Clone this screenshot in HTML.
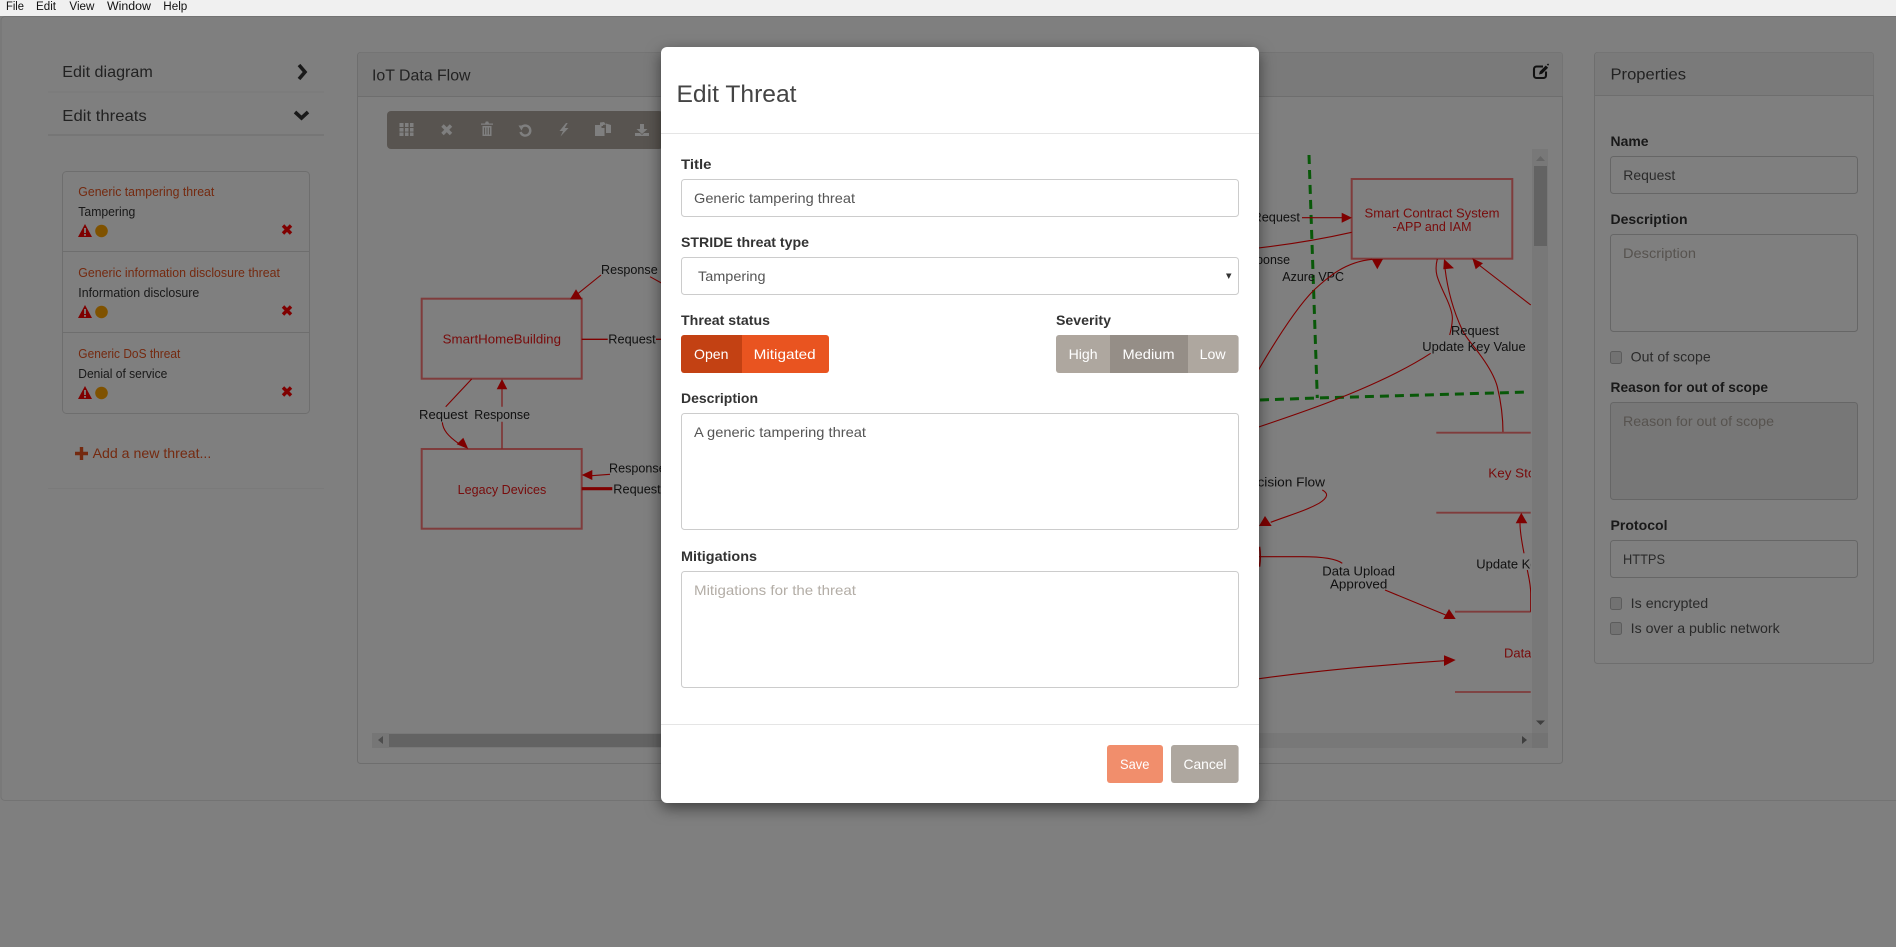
<!DOCTYPE html>
<html lang="en">
<head>
<meta charset="utf-8">
<title>Edit Threat</title>
<style>
html,body{margin:0;padding:0;width:1896px;height:947px;overflow:hidden;background:#fff;font-family:"Liberation Sans",sans-serif}
svg{position:absolute;left:0;top:0;width:1896px;height:947px;overflow:hidden}
svg text{font-family:"Liberation Sans",sans-serif;font-size:14px}
.backdrop{position:absolute;left:0;top:0;width:1896px;height:947px;background:rgba(0,0,0,.5)}
.menu{position:absolute;left:0;top:0;width:1896px;height:16px;background:#f0f0f0}
.modal{position:absolute;left:661px;top:47px;width:598px;height:756px;background:#fff;border-radius:6px;box-shadow:0 5px 15px rgba(0,0,0,.5)}
.d{font-size:12.5px;fill:#222}
.r{font-size:12.5px;fill:#f01818}
.l{font-size:14px;font-weight:700;fill:#333}
.pl{font-size:14px;font-weight:700;fill:#333}
.w{fill:#fff;font-size:14px}
.t{fill:#e95420;font-size:12.5px}
.k{fill:#333;font-size:12.5px}
.h{fill:#444;font-size:16px}
.p{fill:#555;font-size:14px}
.ph{fill:#aea79f;font-size:14px}
.ln{fill:none;stroke:#f00;stroke-width:1.1}
.ar{fill:#f00}
.bx{fill:none;stroke:#ff7878;stroke-width:2}
.gr{fill:none;stroke:#10b010;stroke-width:3;stroke-dasharray:9 6}
.tb{fill:#fff}
</style>
</head>
<body>
<svg viewBox="0 0 1896 947">
  <defs><clipPath id="dg"><rect x="372" y="149" width="1159" height="584"/></clipPath></defs>
  <path d="M1896 16.5H5a4 4 0 0 0-4 4V796a4 4 0 0 0 4 4.5H1896" fill="#fff" stroke="#e6e6e6"/>

  <text class="h" x="62.3" y="77" textLength="90.5" lengthAdjust="spacingAndGlyphs">Edit diagram</text>
  <path d="M299 65l6 7-6 7" fill="none" stroke="#333" stroke-width="3.6"/>
  <rect x="48" y="91.5" width="276" height="1" fill="#f5f5f5"/>
  <text class="h" x="62.3" y="121" textLength="84.5" lengthAdjust="spacingAndGlyphs">Edit threats</text>
  <path d="M295 112l6.5 6 6.5-6" fill="none" stroke="#333" stroke-width="3.6"/>
  <rect x="48" y="134.5" width="276" height="1" fill="#ddd"/>

  <rect x="62.5" y="171.5" width="247" height="242" rx="4" fill="#fff" stroke="#ddd"/>
  <rect x="63" y="251" width="246" height="1" fill="#ddd"/>
  <rect x="63" y="332" width="246" height="1" fill="#ddd"/>

  <text class="t" x="78.3" y="196" textLength="136" lengthAdjust="spacingAndGlyphs">Generic tampering threat</text>
  <text class="k" x="78.3" y="216" textLength="57" lengthAdjust="spacingAndGlyphs">Tampering</text>
  <text class="t" x="78.3" y="277" textLength="201.6" lengthAdjust="spacingAndGlyphs">Generic information disclosure threat</text>
  <text class="k" x="78.3" y="297" textLength="121" lengthAdjust="spacingAndGlyphs">Information disclosure</text>
  <text class="t" x="78.3" y="358" textLength="102" lengthAdjust="spacingAndGlyphs">Generic DoS threat</text>
  <text class="k" x="78.3" y="378" textLength="89" lengthAdjust="spacingAndGlyphs">Denial of service</text>

  <g>
    <path d="M85 224l7 13H78z" fill="#f00"/><rect x="84.1" y="228" width="1.8" height="5" fill="#fff"/><rect x="84.1" y="234" width="1.8" height="1.8" fill="#fff"/>
    <ellipse cx="101.5" cy="231" rx="6.3" ry="6.2" fill="#ffa500"/>
    <path d="M283 225.5l8 8M291 225.5l-8 8" stroke="#f00" stroke-width="3.4" fill="none"/>
  </g>
  <g transform="translate(0 81)">
    <path d="M85 224l7 13H78z" fill="#f00"/><rect x="84.1" y="228" width="1.8" height="5" fill="#fff"/><rect x="84.1" y="234" width="1.8" height="1.8" fill="#fff"/>
    <ellipse cx="101.5" cy="231" rx="6.3" ry="6.2" fill="#ffa500"/>
    <path d="M283 225.5l8 8M291 225.5l-8 8" stroke="#f00" stroke-width="3.4" fill="none"/>
  </g>
  <g transform="translate(0 162)">
    <path d="M85 224l7 13H78z" fill="#f00"/><rect x="84.1" y="228" width="1.8" height="5" fill="#fff"/><rect x="84.1" y="234" width="1.8" height="1.8" fill="#fff"/>
    <ellipse cx="101.5" cy="231" rx="6.3" ry="6.2" fill="#ffa500"/>
    <path d="M283 225.5l8 8M291 225.5l-8 8" stroke="#f00" stroke-width="3.4" fill="none"/>
  </g>

  <path d="M81.5 447v13M75 453.5h13" stroke="#e95420" stroke-width="3.4" fill="none"/>
  <text x="92.6" y="458" style="fill:#e95420;font-size:14px" textLength="118.7" lengthAdjust="spacingAndGlyphs">Add a new threat...</text>
  <rect x="48" y="488" width="276" height="1" fill="#f5f5f5"/>

  <rect x="357.5" y="52.5" width="1205" height="711" rx="3" fill="#fff" stroke="#ddd"/>
  <path d="M358 96V55.5a3 3 0 0 1 3-3H1559.5a3 3 0 0 1 3 3V96z" fill="#f5f5f5"/>
  <rect x="358" y="96" width="1204" height="1" fill="#ddd"/>
  <text class="h" x="372" y="80.5" textLength="98.5" lengthAdjust="spacingAndGlyphs">IoT Data Flow</text>
  <path d="M1543 66.5h-6.5a2.5 2.5 0 0 0-2.5 2.5v6.5a2.5 2.5 0 0 0 2.5 2.5h7a2.5 2.5 0 0 0 2.5-2.5v-4" fill="none" stroke="#222" stroke-width="2.1"/>
  <path d="M1539 74.5l.8-3 6-6 2.3 2.3-6 6z" fill="#222"/>
  <path d="M1546.8 64.5l1.3-1 1 1-1 1.3z" fill="#222"/>

  <rect x="387" y="111" width="276" height="38" rx="4" fill="#b0a9a1"/>
  <g class="tb">
    <path d="M399.5 123h4v4h-4zM405 123h3.5v4H405zM410 123h3.5v4H410zM399.5 128h4v3.6h-4zM405 128h3.5v3.6H405zM410 128h3.5v3.6H410zM399.5 132.5h4v3.5h-4zM405 132.5h3.5v3.5H405zM410 132.5h3.5v3.5H410z"/>
    <path d="M442.5 125.5l8.5 8.5M451 125.5l-8.5 8.5" stroke="#fff" stroke-width="3.5" fill="none"/>
    <path d="M481 123.5h4l.8-2h2.4l.8 2h4v1.3H481zM482.5 126h9v10h-9z"/>
    <path d="M484.5 127.5v7M487 127.5v7M489.5 127.5v7" stroke="#b0a9a1" stroke-width=".9" fill="none"/>
    <path d="M521 128a5 5 0 1 1-.5 4" fill="none" stroke="#fff" stroke-width="2.4"/>
    <path d="M518.5 125.5l5.5 0-2.5 5z"/>
    <path d="M566 123l-6.5 8h3.5l-2.500 5.500 8-8.500h-3.800l3-5z"/>
    <path d="M595 125h6.500v3h3v8H595zM600 122.500l4-.5 2 2.500-3 .5v1h-3zM606 123.500l5 1.500v8h-5z"/>
    <path d="M640 124h4v5h3.500l-5.500 5-5.500-5h3.500zM635 133h5l2 2 2-2h5v3h-14z"/>
  </g>

  <rect x="372" y="733" width="1176" height="15" fill="#f1f1f1"/>
  <rect x="372" y="733" width="17" height="15" fill="#ececec"/>
  <rect x="389" y="734" width="850" height="13" fill="#c6c6c6"/>
  <path d="M383 736v8l-5-4z" fill="#9a9a9a"/>
  <path d="M1522 736v8l5-4z" fill="#7e7e7e"/>
  <rect x="1532" y="149" width="16" height="584" fill="#f1f1f1"/>
  <rect x="1532" y="733" width="16" height="15" fill="#e6e6e6"/>
  <rect x="1534" y="166" width="13" height="80" fill="#c6c6c6"/>
  <path d="M1536 161l4.500-5 4.500 5z" fill="#ccc"/>
  <path d="M1536 720.500h9l-4.500 4.500z" fill="#7e7e7e"/>

  <g clip-path="url(#dg)">
    <rect class="bx" x="421.700" y="298.700" width="160" height="80"/>
    <text class="r" x="442.700" y="343.700" textLength="118.300" lengthAdjust="spacingAndGlyphs">SmartHomeBuilding</text>
    <rect class="bx" x="421.700" y="449" width="160" height="79.700"/>
    <text class="r" x="457.700" y="494" textLength="88.600" lengthAdjust="spacingAndGlyphs">Legacy Devices</text>

    <path class="ln" d="M601 275L578.300 293.300"/>
    <path class="ar" d="M576 289.300l6.300 10H570z"/>
    <text class="d" x="601" y="274" textLength="56.700" lengthAdjust="spacingAndGlyphs">Response</text>
    <path class="ln" d="M650 276.700L665 285"/>
    <path d="M581.700 339.300h26M656 339.300h8" fill="none" stroke="#f00" stroke-width="1.400"/>
    <text class="d" x="608.300" y="343.300" textLength="47.400" lengthAdjust="spacingAndGlyphs">Request</text>

    <path class="ln" d="M471.700 379L445.700 406.700"/>
    <path class="ln" d="M442.300 422.300C443 430 448 436 458.300 443.300"/>
    <path class="ar" d="M463.300 437.700l5 11.300-11.600-4.700z"/>
    <text class="d" x="419" y="419" textLength="48.700" lengthAdjust="spacingAndGlyphs">Request</text>
    <path d="M502 449v-27.300M502 406.700v-19" fill="none" stroke="#ff5050" stroke-width="1.400"/>
    <path class="ar" d="M502 379l5.300 10.300h-10.600z"/>
    <text class="d" x="474.300" y="419" textLength="55.700" lengthAdjust="spacingAndGlyphs">Response</text>

    <path class="ln" d="M610 474.300L591.700 475.700"/>
    <path class="ar" d="M581.700 475l10.600-5v10z"/>
    <text class="d" x="609" y="472.700" textLength="56.700" lengthAdjust="spacingAndGlyphs">Response</text>
    <path d="M581.700 488.700h30.600" stroke="#f00" stroke-width="3.200" fill="none"/>
    <text class="d" x="613.300" y="493.300" textLength="47.400" lengthAdjust="spacingAndGlyphs">Request</text>

    <path class="gr" d="M1309 155L1317.300 398"/>
    <path class="gr" d="M1230 401L1317.300 398L1529 392"/>

    <rect class="bx" x="1351.700" y="179" width="160.600" height="79.700"/>
    <text class="r" x="1364.500" y="217.700" textLength="135" lengthAdjust="spacingAndGlyphs">Smart Contract System</text>
    <text class="r" x="1392.500" y="231" textLength="79" lengthAdjust="spacingAndGlyphs">-APP and IAM</text>

    <text class="d" x="1252.500" y="221.700" textLength="47.400" lengthAdjust="spacingAndGlyphs">Request</text>
    <path class="ln" d="M1302 217.700H1342"/>
    <path class="ar" d="M1352 217.700l-10.300-5v10z"/>
    <path class="ln" d="M1240 250Q1300 244 1351.700 232.300"/>
    <text class="d" x="1234" y="264" textLength="56" lengthAdjust="spacingAndGlyphs">Response</text>
    <text class="d" x="1282.300" y="281" textLength="61.700" lengthAdjust="spacingAndGlyphs">Azure VPC</text>
    <path class="ln" d="M1255 376C1270 350 1294 310 1314 290C1328 277 1345 262 1372 259.300"/>
    <path class="ar" d="M1371.700 259H1383l-5.700 10.300z"/>
    <path class="ln" d="M1437.300 259C1434 272 1437 278 1445.700 296.700C1450 306 1453 314 1452.300 320C1452 326 1451 330 1449.700 335M1430.700 353.300C1405 370 1375 384 1339 398.300C1310 410 1285 418 1250 430"/>
    <path class="ar" d="M1444 259l10 9.300-10.700 1z"/>
    <path class="ln" d="M1445 268.300C1447 285 1452 308 1462.300 330C1466 338 1473 345 1479 353.300C1490 368 1495 378 1497.300 386.700C1501 402 1503 418 1503 432.700"/>
    <path class="ar" d="M1472.300 258.300l10.700 5-7.300 6z"/>
    <path class="ln" d="M1479 265L1530.700 305"/>
    <text class="d" x="1451" y="335" textLength="48" lengthAdjust="spacingAndGlyphs">Request</text>
    <text class="d" x="1422.300" y="351" textLength="103.400" lengthAdjust="spacingAndGlyphs">Update Key Value</text>

    <path d="M1436.300 432.700h94.400M1436.300 512.700h94.400" stroke="#ff7878" stroke-width="1.800" fill="none"/>
    <text class="r" x="1488.300" y="477.700" textLength="59" lengthAdjust="spacingAndGlyphs">Key Store</text>

    <text class="d" x="1240" y="486.700" textLength="85" lengthAdjust="spacingAndGlyphs">Decision Flow</text>
    <path class="ln" d="M1322.300 490C1328 493 1329 497 1319 503.300C1305 511 1290 515 1270.700 522.300"/>
    <path class="ar" d="M1265 516l6.700 10H1259z"/>
    <path class="ln" d="M1255 556.700H1302.300C1320 556.700 1335 558 1342.300 563.300"/>
    <path class="ln" d="M1259.500 546.700Q1261 556 1259.500 566.700" style="stroke-width:1.600"/>
    <text class="d" x="1322.300" y="575.700" textLength="72.700" lengthAdjust="spacingAndGlyphs">Data Upload</text>
    <text class="d" x="1330" y="588.300" textLength="57.300" lengthAdjust="spacingAndGlyphs">Approved</text>
    <path class="ln" d="M1385 590L1445.700 615"/>
    <path class="ar" d="M1449 609l6.700 10h-12.400z"/>

    <path d="M1455 611.700h75.700M1455 692h75.700" stroke="#ff7878" stroke-width="1.800" fill="none"/>
    <path class="ln" d="M1530.700 611.700V593.300C1530.700 585 1529 578 1527.300 570M1524 553.300C1522 543 1520 533 1520 523.300"/>
    <path class="ar" d="M1521.300 512.700l6 10.600h-11.600z"/>
    <text class="d" x="1476.300" y="568.300" textLength="103.400" lengthAdjust="spacingAndGlyphs">Update Key Value</text>
    <text class="r" x="1504" y="657.300" textLength="62" lengthAdjust="spacingAndGlyphs">Data Store</text>
    <path class="ln" d="M1240 681.500C1290 674 1340 668 1445 660.700"/>
    <path class="ar" d="M1455.700 660l-11.700-4.700V666z"/>
  </g>

  <rect x="1594.500" y="52.500" width="279" height="611" rx="3" fill="#fff" stroke="#ddd"/>
  <path d="M1595 95V55.500a3 3 0 0 1 3-3H1870.500a3 3 0 0 1 3 3V95z" fill="#f5f5f5"/>
  <rect x="1595" y="95" width="278" height="1" fill="#ddd"/>
  <text class="h" x="1610.500" y="79.500" textLength="75.500" lengthAdjust="spacingAndGlyphs">Properties</text>

  <text class="pl" x="1610.500" y="146" textLength="38" lengthAdjust="spacingAndGlyphs">Name</text>
  <rect x="1610.500" y="156.500" width="247" height="37" rx="3" fill="#fff" stroke="#ccc"/>
  <text class="p" x="1623.300" y="180" textLength="52" lengthAdjust="spacingAndGlyphs">Request</text>

  <text class="pl" x="1610.500" y="224" textLength="77" lengthAdjust="spacingAndGlyphs">Description</text>
  <rect x="1610.500" y="234.500" width="247" height="97" rx="3" fill="#fff" stroke="#ccc"/>
  <text class="ph" x="1623" y="258" textLength="73" lengthAdjust="spacingAndGlyphs">Description</text>

  <rect x="1610.500" y="351.500" width="11" height="12" rx="2" fill="#e4e4e4" stroke="#b8b8b8"/>
  <text class="p" x="1630.700" y="361.500" textLength="80" lengthAdjust="spacingAndGlyphs">Out of scope</text>

  <text class="pl" x="1610.500" y="392" textLength="157.500" lengthAdjust="spacingAndGlyphs">Reason for out of scope</text>
  <rect x="1610.500" y="402.500" width="247" height="97" rx="3" fill="#eee" stroke="#ccc"/>
  <text class="ph" x="1623" y="426" textLength="151" lengthAdjust="spacingAndGlyphs">Reason for out of scope</text>

  <text class="pl" x="1610.500" y="530" textLength="57" lengthAdjust="spacingAndGlyphs">Protocol</text>
  <rect x="1610.500" y="540.500" width="247" height="37" rx="3" fill="#fff" stroke="#ccc"/>
  <text class="p" x="1623" y="564" textLength="42" lengthAdjust="spacingAndGlyphs">HTTPS</text>

  <rect x="1610.500" y="597.500" width="11" height="12" rx="2" fill="#e4e4e4" stroke="#b8b8b8"/>
  <text class="p" x="1630.700" y="608" textLength="77.500" lengthAdjust="spacingAndGlyphs">Is encrypted</text>
  <rect x="1610.500" y="622.500" width="11" height="12" rx="2" fill="#e4e4e4" stroke="#b8b8b8"/>
  <text class="p" x="1630.700" y="633" textLength="149" lengthAdjust="spacingAndGlyphs">Is over a public network</text>
</svg>

<div class="backdrop"></div>
<div class="modal"></div>

<svg viewBox="0 0 1896 947">
  <text x="676.500" y="102" style="font-size:24px;fill:#444" textLength="120" lengthAdjust="spacingAndGlyphs">Edit Threat</text>
  <rect x="661" y="133" width="598" height="1" fill="#e5e5e5"/>

  <text class="l" x="681" y="169" textLength="30.500" lengthAdjust="spacingAndGlyphs">Title</text>
  <rect x="681.500" y="179.500" width="557" height="37" rx="3" fill="#fff" stroke="#ccc"/>
  <text x="694" y="203" style="fill:#555" textLength="161" lengthAdjust="spacingAndGlyphs">Generic tampering threat</text>

  <text class="l" x="681" y="247" textLength="128" lengthAdjust="spacingAndGlyphs">STRIDE threat type</text>
  <rect x="681.500" y="257.500" width="557" height="37" rx="3" fill="#fff" stroke="#ccc"/>
  <text x="698" y="281" style="fill:#555" textLength="67.500" lengthAdjust="spacingAndGlyphs">Tampering</text>
  <path d="M1226 273.500h5.500l-2.750 5.500z" fill="#333"/>

  <text class="l" x="681" y="325" textLength="89" lengthAdjust="spacingAndGlyphs">Threat status</text>
  <path d="M742 335H684a3 3 0 0 0-3 3v32a3 3 0 0 0 3 3h58z" fill="#c34113"/>
  <path d="M742 335h84a3 3 0 0 1 3 3v32a3 3 0 0 1-3 3h-84z" fill="#e95420"/>
  <text class="w" x="694" y="359" textLength="34.500" lengthAdjust="spacingAndGlyphs">Open</text>
  <text class="w" x="753.700" y="359" textLength="62" lengthAdjust="spacingAndGlyphs">Mitigated</text>

  <text class="l" x="1056" y="325" textLength="55" lengthAdjust="spacingAndGlyphs">Severity</text>
  <path d="M1110 335h-51a3 3 0 0 0-3 3v32a3 3 0 0 0 3 3h51z" fill="#aea79f"/>
  <rect x="1110" y="335" width="78" height="38" fill="#958e87"/>
  <path d="M1188 335h47.600a3 3 0 0 1 3 3v32a3 3 0 0 1-3 3H1188z" fill="#aea79f"/>
  <text class="w" x="1068.600" y="359" textLength="29" lengthAdjust="spacingAndGlyphs">High</text>
  <text class="w" x="1122.500" y="359" textLength="52" lengthAdjust="spacingAndGlyphs">Medium</text>
  <text class="w" x="1199.600" y="359" textLength="26" lengthAdjust="spacingAndGlyphs">Low</text>

  <text class="l" x="681" y="403" textLength="77" lengthAdjust="spacingAndGlyphs">Description</text>
  <rect x="681.500" y="413.500" width="557" height="116" rx="3" fill="#fff" stroke="#ccc"/>
  <text x="694" y="437" style="fill:#555" textLength="172" lengthAdjust="spacingAndGlyphs">A generic tampering threat</text>

  <text class="l" x="681" y="561" textLength="76" lengthAdjust="spacingAndGlyphs">Mitigations</text>
  <rect x="681.500" y="571.500" width="557" height="116" rx="3" fill="#fff" stroke="#ccc"/>
  <text x="694" y="595" style="fill:#b3ada6" textLength="162" lengthAdjust="spacingAndGlyphs">Mitigations for the threat</text>

  <rect x="661" y="724" width="598" height="1" fill="#e5e5e5"/>
  <rect x="1107" y="745" width="56" height="38" rx="3" fill="#f18e6c"/>
  <text class="w" x="1120" y="769" textLength="29.400" lengthAdjust="spacingAndGlyphs">Save</text>
  <rect x="1171" y="745" width="67.600" height="38" rx="3" fill="#aea79f"/>
  <text class="w" x="1183.500" y="769" textLength="43" lengthAdjust="spacingAndGlyphs">Cancel</text>
</svg>

<div class="menu"></div>
<svg viewBox="0 0 1896 947" style="height:16px;width:1896px" preserveAspectRatio="xMinYMin slice">
  <g style="fill:#111">
    <text x="6" y="10" style="font-size:11.5px" textLength="18" lengthAdjust="spacingAndGlyphs">File</text>
    <text x="36" y="10" style="font-size:11.5px" textLength="20" lengthAdjust="spacingAndGlyphs">Edit</text>
    <text x="69.400" y="10" style="font-size:11.5px" textLength="25" lengthAdjust="spacingAndGlyphs">View</text>
    <text x="107" y="10" style="font-size:11.5px" textLength="44" lengthAdjust="spacingAndGlyphs">Window</text>
    <text x="163.300" y="10" style="font-size:11.5px" textLength="24" lengthAdjust="spacingAndGlyphs">Help</text>
  </g>
</svg>
</body>
</html>
